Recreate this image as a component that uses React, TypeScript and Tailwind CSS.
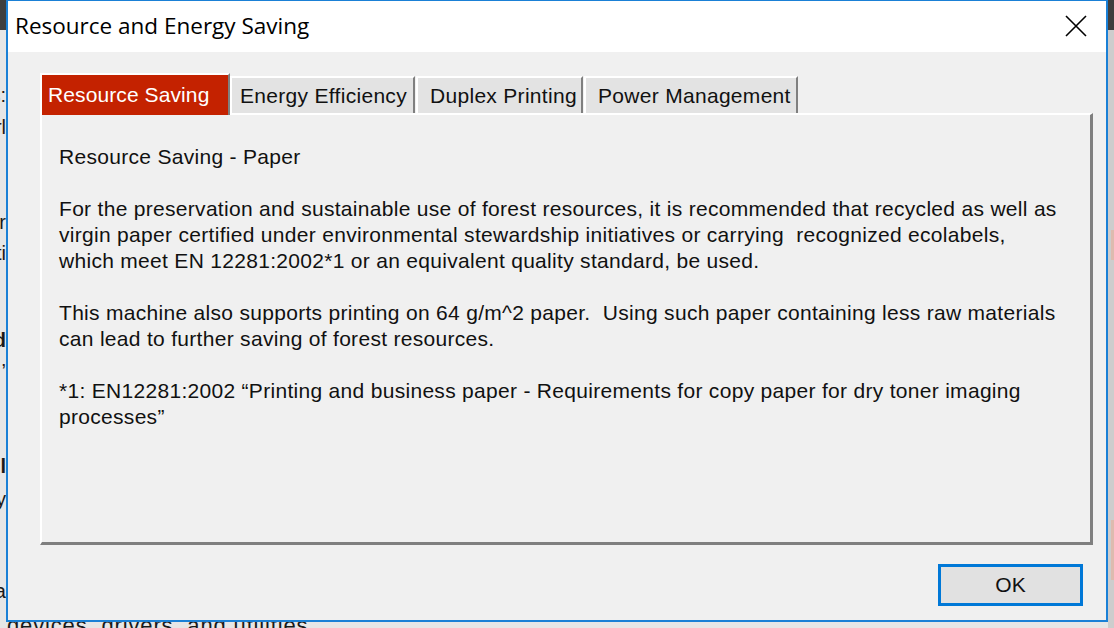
import React from "react";

const body = { fontFamily: '"Liberation Sans", Arial, sans-serif' };
const title = { fontFamily: '"Open Sans", "Noto Sans", sans-serif' };

const lines: string[] = [
  "Resource Saving - Paper",
  "",
  "For the preservation and sustainable use of forest resources, it is recommended that recycled as well as",
  "virgin paper certified under environmental stewardship initiatives or carrying  recognized ecolabels,",
  "which meet EN 12281:2002*1 or an equivalent quality standard, be used.",
  "",
  "This machine also supports printing on 64 g/m^2 paper.  Using such paper containing less raw materials",
  "can lead to further saving of forest resources.",
  "",
  "*1: EN12281:2002 \u201CPrinting and business paper - Requirements for copy paper for dry toner imaging",
  "processes\u201D",
];

const bgFragments: { top: number; text: string; bold?: boolean }[] = [
  { top: 82, text: "Status:" },
  { top: 114, text: "Ctrl" },
  { top: 209, text: "Printer" },
  { top: 240, text: "Multi" },
  { top: 327, text: "Reload", bold: true },
  { top: 358, text: "\u2019" },
  { top: 453, text: "Install", bold: true },
  { top: 486, text: "Copy" },
  { top: 578, text: "Data" },
];

export default function App() {
  return (
    <div className="relative w-[1114px] h-[628px] overflow-hidden bg-[#e6e6e6]" style={body}>
      {/* background desktop / page */}
      <div className="absolute left-0 top-0 w-full h-[30px] bg-[#3f3f3f]" />
      <div className="absolute left-0 top-0 w-[6px] h-full overflow-hidden">
        {bgFragments.map((f, i) => (
          <div
            key={i}
            className={`absolute right-0 whitespace-nowrap text-[20px] leading-[26px] text-[#1a1a1a] ${f.bold ? "font-bold" : ""}`}
            style={{ top: f.top }}
          >
            {f.text}
          </div>
        ))}
      </div>
      <div className="absolute right-0 top-[30px] w-[6px] h-[598px] bg-[#cdcdcd]" />
      <div className="absolute right-0 top-[230px] w-[3px] h-[30px] bg-[#e6b3a3] opacity-70" />
      <div className="absolute right-0 top-[520px] w-[3px] h-[60px] bg-[#e6b3a3] opacity-70" />
      <div className="absolute left-[7px] top-[613px] whitespace-nowrap text-[22px] tracking-[0.85px] leading-[26px] text-[#1a1a1a]">
        devices, drivers, and utilities
      </div>

      {/* dialog window */}
      <div className="absolute left-[6px] top-0 w-[1102px] h-[622px] border-t border-l-2 border-r-2 border-b-2 border-[#1a80d6] bg-[#f0f0f0] flex flex-col">
        {/* title bar */}
        <div className="h-[51px] bg-white flex items-center justify-between pl-[7px] pr-[19px] shrink-0">
          <span className="text-[22.5px] text-black pb-[1px]" style={title}>
            Resource and Energy Saving
          </span>
          <svg width="22" height="22" viewBox="0 0 22 22" className="mb-[1px]">
            <path d="M1 1 L21 21 M21 1 L1 21" stroke="#000" strokeWidth="1.6" fill="none" />
          </svg>
        </div>

        {/* body */}
        <div className="flex-1 flex flex-col pt-[21px]">
          {/* tabs */}
          <div className="flex items-end ml-[32px] h-[40px] relative z-10 text-[21px] tracking-[0.3px]">
            <div className="w-[190px] h-[42px] mb-[-2px] bg-[#c42200] border-t-2 border-l-2 border-white border-r-2 border-r-[#7f7f7f] pl-[6px] flex items-center text-white whitespace-nowrap tracking-[0.1px]">
              Resource Saving
            </div>
            <div className="w-[185px] h-[37px] bg-[#e3e3e3] border-t-2 border-l-2 border-white border-r-2 border-r-[#7f7f7f] pl-[8px] flex items-center text-[#111] whitespace-nowrap">
              Energy Efficiency
            </div>
            <div className="ml-[1px] w-[167px] h-[37px] bg-[#e3e3e3] border-t-2 border-l-2 border-white border-r-2 border-r-[#7f7f7f] pl-[12px] flex items-center text-[#111] whitespace-nowrap">
              Duplex Printing
            </div>
            <div className="ml-[1px] w-[214px] h-[37px] bg-[#e3e3e3] border-t-2 border-l-2 border-white border-r-2 border-r-[#7f7f7f] pl-[12px] flex items-center text-[#111] whitespace-nowrap">
              Power Management
            </div>
          </div>

          {/* panel */}
          <div className="ml-[32px] w-[1053px] h-[432px] border-t-2 border-l-2 border-white border-r-[3px] border-b-[3px] border-r-[#7f7f7f] border-b-[#7f7f7f] bg-[#f0f0f0] pl-[17px] pt-[29px]">
            {lines.map((l, i) => (
              <div key={i} className="h-[26px] leading-[26px] text-[21px] tracking-[0.3px] text-[#111] whitespace-pre">
                {l}
              </div>
            ))}
          </div>

          {/* buttons */}
          <div className="flex justify-end pr-[23px] mt-[19px]">
            <button className="w-[145px] h-[42px] border-[3px] border-[#0078d7] bg-[#e1e1e1] text-[21px] text-[#111] flex items-center justify-center">
              OK
            </button>
          </div>
        </div>
      </div>
    </div>
  );
}
